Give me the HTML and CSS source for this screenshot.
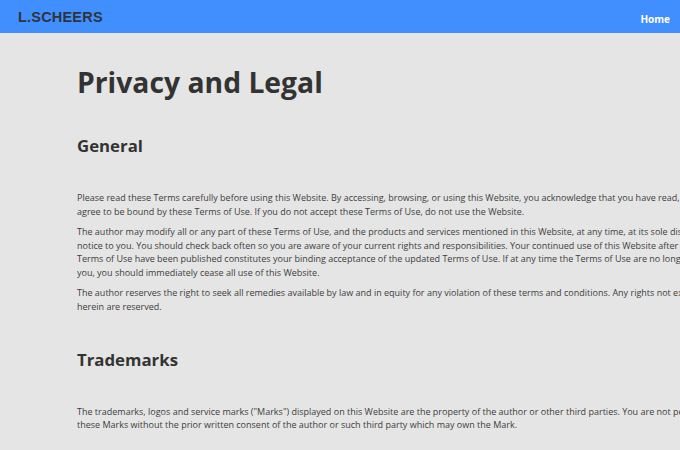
FILE: index.html
```html
<!DOCTYPE html>
<html>
<head>
<meta charset="utf-8">
<link rel="stylesheet" href="styles.css">
</head>
<body>
<header class="topbar">
  <a class="brand" href="#">L.SCHEERS</a>
  <nav class="nav"><a class="nav-link" href="#">Home</a></nav>
</header>
<main class="page">
  <h1 class="title">Privacy and Legal</h1>
  <section class="block">
    <h2 class="heading">General</h2>
    <p class="para">Please read these Terms carefully before using this Website. By accessing, browsing, or using this Website, you acknowledge that you have read, understood, and agree to be bound by these Terms of Use. If you do not accept these Terms of Use, do not use the Website.</p>
    <p class="para">The author may modify all or any part of these Terms of Use, and the products and services mentioned in this Website, at any time, at its sole discretion, without notice to you. You should check back often so you are aware of your current rights and responsibilities. Your continued use of this Website after changes to these Terms of Use have been published constitutes your binding acceptance of the updated Terms of Use. If at any time the Terms of Use are no longer acceptable to you, you should immediately cease all use of this Website.</p>
    <p class="para">The author reserves the right to seek all remedies available by law and in equity for any violation of these terms and conditions. Any rights not expressly granted herein are reserved.</p>
  </section>
  <section class="block">
    <h2 class="heading">Trademarks</h2>
    <p class="para">The trademarks, logos and service marks ("Marks") displayed on this Website are the property of the author or other third parties. You are not permitted to use these Marks without the prior written consent of the author or such third party which may own the Mark.</p>
  </section>
</main>
</body>
</html>
```
FILE: styles.css
```css
html, body {
  margin: 0;
  padding: 0;
  background: #e5e5e5;
  overflow: hidden;
}
body {
  font-family: "Open Sans", "DejaVu Sans", sans-serif;
  color: #333333;
  width: 680px;
  height: 450px;
}
.topbar {
  height: 33px;
  background: #418ffe;
  display: flex;
  align-items: center;
  justify-content: space-between;
  padding: 0 10px 0 18px;
}
.brand {
  font-family: "Liberation Sans", Arial, sans-serif;
  font-weight: bold;
  font-size: 14.5px;
  color: #2f343b;
  text-decoration: none;
  letter-spacing: 0.2px;
}
.nav-link {
  font-weight: bold;
  font-size: 10px;
  color: #ffffff;
  text-decoration: none;
}
.page {
  padding: 29px 0 0 77px;
  width: 690px;
}
.title {
  margin: 0;
  font-size: 28.3px;
  font-weight: bold;
  line-height: 40px;
  color: #333333;
}
.heading {
  margin: 32px 0 33px;
  font-size: 16.8px;
  font-weight: bold;
  line-height: 24px;
}
.block + .block .heading {
  margin-top: 34px;
  margin-bottom: 33px;
}
.para {
  margin: 0 0 6.5px;
  font-size: 9px;
  line-height: 13.7px;
  color: #3d3d3d;
}
```
